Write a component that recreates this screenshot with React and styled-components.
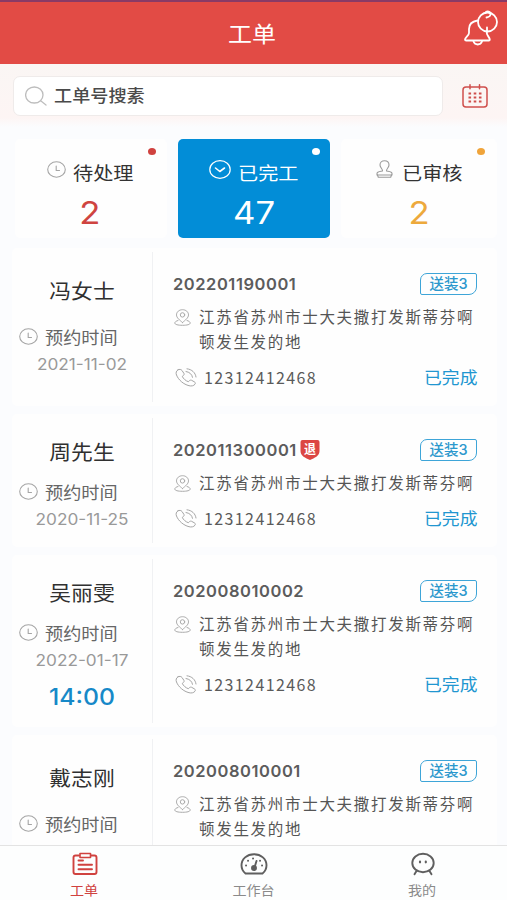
import React from 'react';
import styled, { createGlobalStyle } from 'styled-components';

const cjk = "'Noto Sans CJK SC', sans-serif";
const latin = "Inter, 'Noto Sans CJK SC', sans-serif";

const GlobalStyle = createGlobalStyle`
  * {
    box-sizing: border-box;
  }

  body {
    margin: 0;
    font-family: ${cjk};
    color: #3c3c3c;
    background: #fbfcfe;
  }
`;

const Page = styled.div`
  display: flex;
  flex-direction: column;
  height: 900px;
  overflow: hidden;
  background: #fbfcfe;
`;

const Header = styled.header`
  display: grid;
  grid-template-columns: 1fr auto 1fr;
  align-items: center;
  flex: none;
  height: 64px;
  padding: 0 9px 0 7px;
  border-top: 2px solid #8a3a66;
  background: #e24b45;
`;

const Title = styled.h1`
  grid-column: 2;
  margin: 0 0 2px;
  font-size: 22px;
  font-weight: 400;
  line-height: 30px;
  color: #fff;
  transform: scaleX(1.09);
`;

const BellButton = styled.div`
  justify-self: end;
  height: 38px;
  margin-bottom: 13px;
`;

const SearchBar = styled.div`
  display: flex;
  align-items: center;
  flex: none;
  height: 63px;
  padding: 0 18px 0 13px;
  background: linear-gradient(#faf6f4, #fdf5f4 85%, #fbfcfe);
`;

const SearchInput = styled.div`
  display: flex;
  align-items: center;
  width: 430px;
  height: 40px;
  margin-right: 19px;
  padding-left: 11px;
  border: 1px solid #efebea;
  border-radius: 7px;
  background: #fff;
`;

const SearchText = styled.span`
  margin: 0 0 2px 7px;
  font-size: 16.5px;
  font-weight: 500;
  line-height: 24px;
  color: #4a4a4a;
  transform: scaleX(1.1);
  transform-origin: left;
`;

const Stats = styled.div`
  display: flex;
  gap: 11px;
  flex: none;
  padding: 12px 10px 10px 15px;
`;

const StatCard = styled.div`
  position: relative;
  width: ${(p) => p.$width}px;
  height: 99px;
  padding-top: 20px;
  border-radius: 5px;
  background: ${(p) => (p.$active ? '#028dd7' : '#fefefe')};
  color: ${(p) => (p.$active ? '#fff' : '#333')};
`;

const StatLabel = styled.div`
  display: flex;
  align-items: center;
  height: 26px;
  padding-left: ${(p) => p.$indent}px;
  font-size: 18px;
  white-space: nowrap;

  svg {
    margin: 0 ${(p) => p.$gap}px 6px 0;
  }

  span {
    transform: scaleX(1.12);
    transform-origin: left;
  }
`;

const StatValue = styled.div`
  margin-top: 9px;
  padding-right: ${(p) => p.$shift}px;
  font-family: ${latin};
  font-size: 31px;
  line-height: 38px;
  text-align: center;
  color: ${(p) => p.$color};
  transform: scaleX(1.12);
`;

const Dot = styled.i`
  position: absolute;
  top: 9px;
  right: ${(p) => p.$right}px;
  width: 8px;
  height: 7px;
  border-radius: 50%;
  background: ${(p) => p.$color};
`;

const OrderList = styled.main`
  display: flex;
  flex-direction: column;
  gap: 8px;
  flex: 1;
  min-height: 0;
  padding: 0 10px 0 12px;
  overflow: hidden;
`;

const OrderCard = styled.article`
  display: flex;
  flex: none;
  height: ${(p) => p.$height}px;
  padding: 4px 0;
  border-radius: 5px;
  background: #fefefe;
`;

const Customer = styled.div`
  width: 141px;
  padding-top: ${(p) => (p.$loose ? 26 : 21)}px;
  border-right: 1px solid #f0f1f3;
  text-align: center;
`;

const CustomerName = styled.div`
  margin-bottom: ${(p) => (p.$loose ? 22 : 16)}px;
  font-size: 20px;
  line-height: 26px;
  color: #303030;
  transform: scaleX(1.09);
`;

const Appointment = styled.div`
  display: flex;
  align-items: center;
  height: 22px;
  padding-left: 7px;
  font-size: 16.5px;
  color: #666;

  svg {
    margin: 0 7px 2px 0;
  }

  span {
    transform: scaleX(1.1);
    transform-origin: left;
  }
`;

const OrderDate = styled.div`
  margin-top: 6px;
  font-family: ${latin};
  font-size: 15.5px;
  line-height: 22px;
  color: #999;
  transform: scaleX(1.11);
`;

const OrderTime = styled.div`
  margin-top: 11px;
  font-family: ${latin};
  font-size: 22.5px;
  font-weight: 500;
  line-height: 28px;
  color: #1689c8;
  transform: scaleX(1.1);
`;

const Detail = styled.div`
  flex: 1;
  padding: 21px 20px 0 20px;
`;

const DetailRow = styled.div`
  display: flex;
  align-items: center;
  height: 22px;
`;

const OrderNumber = styled.span`
  font-family: ${latin};
  font-size: 16.5px;
  font-weight: 600;
  line-height: 22px;
  letter-spacing: 0.55px;
  color: #5c5c5c;
`;

const Refund = styled.span`
  position: relative;
  display: flex;
  justify-content: center;
  width: 20px;
  height: 20px;
  margin-left: 3px;
  font-size: 12px;
  font-weight: 700;
  line-height: 17px;
  color: #fff;

  svg {
    position: absolute;
    inset: 0;
  }

  span {
    position: relative;
  }
`;

const Tag = styled.span`
  width: 57px;
  height: 22px;
  margin-left: auto;
  border: 1.5px solid #3ea5d8;
  border-radius: 7px 2px 8px 2px;
  font-family: ${latin};
  font-size: 14.5px;
  font-weight: 500;
  line-height: 20px;
  text-align: center;
  color: #2c98cd;
`;

const Address = styled.div`
  display: flex;
  margin-top: 9px;

  svg {
    flex: none;
    margin: 5px 0 0 1px;
  }

  p {
    width: 284px;
    margin: 0 -10px 0 8px;
    font-size: 15.5px;
    line-height: 25px;
    letter-spacing: 1.7px;
    color: #555;
  }
`;

const Contact = styled(DetailRow)`
  margin-top: 12px;
  padding-left: 2px;
`;

const Phone = styled.span`
  margin-left: 7px;
  font-size: 16px;
  letter-spacing: 1.4px;
  color: #5a5a5a;
`;

const Status = styled.span`
  margin-left: auto;
  font-size: 16.5px;
  color: #2196d0;
  transform: scaleX(1.08);
  transform-origin: right;
`;

const TabBar = styled.nav`
  display: grid;
  grid-template-columns: repeat(3, 1fr);
  flex: none;
  height: 55px;
  border-top: 1px solid #e3e3e3;
  background: #fdfefe;
`;

const Tab = styled.div`
  display: flex;
  flex-direction: column;
  align-items: center;
  padding-top: 5px;
  font-size: 13px;
  line-height: 18px;
  color: ${(p) => (p.$active ? '#d0423f' : '#8a8a8a')};

  svg {
    height: 26px;
    margin-bottom: 4px;
    color: ${(p) => (p.$active ? '#d0423f' : '#5f5f5f')};
  }

  span {
    transform: scaleX(1.08);
  }
`;

const Svg = ({ w, h, width = 1.2, children, ...rest }) => (
  <svg
    width={w}
    height={h}
    viewBox={`0 0 ${w} ${h}`}
    fill="none"
    stroke="currentColor"
    strokeWidth={width}
    strokeLinecap="round"
    strokeLinejoin="round"
    {...rest}
  >
    {children}
  </svg>
);

const BellIcon = () => (
  <Svg w={36} h={38} width={1.8} color="#fff">
    <path d="M15.500 12.500C9.500 13.500 7 17 7 21v4c0 2.500-4 4.500-4 6.500 0 .7.500 1 1.200 1h22.600c.7 0 1-.4 1-1 0-2-3-4-3-6.500v-1.500" />
    <path d="M11.500 33.500c1.500 4 7 4 8.500 0" />
    <circle cx="25.500" cy="14" r="9.500" />
    <path d="M23.500 5c.3-2.200 4.500-2.200 5 .5.3 2-1.500 3.500-4 4M25 19.500v4" />
  </Svg>
);

const SearchIcon = () => (
  <Svg w={22} h={20} width={1.3} color="#bdbdbd">
    <ellipse cx="9.300" cy="9" rx="8.700" ry="8" />
    <path d="M16 15l5 4" />
  </Svg>
);

const CalendarIcon = () => (
  <Svg w={26} h={24} width={1.5} color="#cf4f4c">
    <rect x="1" y="3" width="24" height="20" rx="3" />
    <path d="M8 .8v4M17.500 .8v4" />
    <path d="M6.500 9.500h13M6.500 13.500h13M6.500 17.500h13" strokeWidth="1.800" strokeDasharray="2.600 2.600" strokeLinecap="butt" />
  </Svg>
);

const ClockIcon = () => (
  <Svg w={19} h={17} width={1.1} color="#a5a5a5">
    <ellipse cx="9.500" cy="8.500" rx="8.800" ry="7.700" />
    <path d="M9.200 5v4.500h3.300" />
  </Svg>
);

const CheckIcon = () => (
  <Svg w={22} h={19} width={1.2} color="#fff">
    <ellipse cx="11" cy="9.500" rx="10.200" ry="8.800" />
    <path d="M6.500 8l4.300 3.500L15.500 8" strokeWidth="1.600" />
  </Svg>
);

const StampIcon = () => (
  <Svg w={17} h={18} width={1.1} color="#9a9a9a">
    <path d="M6.500 11c.3-2.200-2.500-3.200-2.500-6 0-2.500 2-4.200 4.500-4.200S13 2.500 13 5c0 2.800-2.800 3.800-2.500 6 2.500.5 5.500.5 5.500 2.500v1.500H1v-1.500c0-2 3-2 5.500-2.500z" />
    <path d="M1.500 15l.8 2.300h12.400l.8-2.300" />
  </Svg>
);

const PinIcon = () => (
  <Svg w={17} h={17} width={1} color="#aaa">
    <path d="M8.500 13.500C5.500 11 2.500 8.700 2.500 5.900c0-3 2.700-5.200 6-5.200s6 2.200 6 5.200c0 2.800-3 5.100-6 7.600z" />
    <circle cx="8.500" cy="5.900" r="2.200" />
    <path d="M4 11.500c-2 .5-3.200 1.500-3.200 2.500 0 1.500 3 2.300 7.700 2.300s7.700-.8 7.700-2.300c0-1-1.200-2-3.200-2.500" />
  </Svg>
);

const PhoneIcon = () => (
  <Svg w={22} h={19} width={1} color="#a5a5a5">
    <path d="M3 1.800C1.200 2.800.6 4.800 1.500 7c2 5 7 9.300 12.500 10.700 2.300.6 4.800.2 6-1.500.6-.9.400-1.700-.4-2.200l-2.800-1.600c-.8-.5-1.700-.3-2.400.3l-1.100 1c-2.600-.9-5-3-6-5.300l1.200-1c.7-.6.8-1.400.3-2.200L7 2.500c-.8-1.200-2.500-1.500-4-.7z" />
    <path d="M11 3.500c3.500.5 6 2.800 6.500 5.800M12 .8c5 .5 8.500 4 9 8.200" />
  </Svg>
);

const RefundShield = () => (
  <svg width="20" height="20" viewBox="0 0 20 20" fill="#dc4643">
    <path d="M2.500 0h15A2 2 0 0 1 19.500 2v9c0 5-5 7-9.500 9C5.500 18 .5 16 .5 11V2a2 2 0 0 1 2-2z" />
  </svg>
);

const OrdersIcon = () => (
  <Svg w={26} h={26} width={1.9}>
    <path d="M7 4.500H3.500C2.200 4.500 1.500 5.200 1.500 6.500v14.500c0 1.300.7 2 2 2h19c1.300 0 2-.7 2-2V6.500c0-1.300-.7-2-2-2H19" />
    <path d="M8 2.500h10.500v4H8z" strokeWidth="1.600" />
    <path d="M6.500 9.500h4.500M6.500 13.800h13.500M6.500 18.300h13.500" />
  </Svg>
);

const DashboardIcon = () => (
  <Svg w={28} h={26} width={1.9}>
    <path d="M5.500 22.500C3 20.500 1.500 17.500 1.500 14.300 1.500 8 7 3.200 14 3.200S26.500 8 26.500 14.300c0 3.200-1.500 6.200-4 8.200z" />
    <circle cx="14" cy="17" r="2" fill="currentColor" />
    <path d="M14.500 16.500L16.500 10" />
    <path d="M6 14.500h.1M8 9.700h.1M13 7.500h.1M20 9.700h.1M22 14.500h.1" />
  </Svg>
);

const MineIcon = () => (
  <Svg w={26} h={26} width={1.9}>
    <ellipse cx="13" cy="12" rx="10.700" ry="9.300" />
    <path d="M6.500 20l-2 3.300M19.500 20l2 3.300" />
    <path d="M10 10.700v.6M15.800 10.700v.6" strokeWidth="2.200" />
  </Svg>
);

const phone = '12312412468';
const shortAddress = '江苏省苏州市士大夫撒打发斯蒂芬啊';
const longAddress = `${shortAddress}顿发生发的地`;

const orders = [
  { name: '冯女士', date: '2021-11-02', number: '202201190001', address: longAddress, phone, height: 158, loose: true },
  { name: '周先生', date: '2020-11-25', number: '202011300001', address: shortAddress, phone, height: 133, refund: true },
  { name: '吴丽雯', date: '2022-01-17', time: '14:00', number: '202008010002', address: longAddress, phone, height: 172 },
  { name: '戴志刚', date: '2020-07-29', number: '202008010001', address: longAddress, height: 158, loose: true },
];

const Order = ({ order }) => (
  <OrderCard $height={order.height}>
    <Customer $loose={order.loose}>
      <CustomerName $loose={order.loose}>{order.name}</CustomerName>
      <Appointment>
        <ClockIcon />
        <span>预约时间</span>
      </Appointment>
      <OrderDate>{order.date}</OrderDate>
      {order.time && <OrderTime>{order.time}</OrderTime>}
    </Customer>
    <Detail>
      <DetailRow>
        <OrderNumber>{order.number}</OrderNumber>
        {order.refund && (
          <Refund>
            <RefundShield />
            <span>退</span>
          </Refund>
        )}
        <Tag>送装3</Tag>
      </DetailRow>
      <Address>
        <PinIcon />
        <p>{order.address}</p>
      </Address>
      {order.phone && (
        <Contact>
          <PhoneIcon />
          <Phone>{order.phone}</Phone>
          <Status>已完成</Status>
        </Contact>
      )}
    </Detail>
  </OrderCard>
);

const App = () => {
  return (
    <>
      <GlobalStyle />
      <Page>
        <Header>
          <Title>工单</Title>
          <BellButton>
            <BellIcon />
          </BellButton>
        </Header>

        <SearchBar>
          <SearchInput>
            <SearchIcon />
            <SearchText>工单号搜素</SearchText>
          </SearchInput>
          <CalendarIcon />
        </SearchBar>

        <Stats>
          <StatCard $width={152}>
            <Dot $color="#d0423f" $right={11} />
            <StatLabel $indent={32} $gap={7}>
              <ClockIcon />
              <span>待处理</span>
            </StatLabel>
            <StatValue $color="#cf4440" $shift={2}>2</StatValue>
          </StatCard>
          <StatCard $width={152} $active>
            <Dot $color="#fff" $right={10} />
            <StatLabel $indent={31} $gap={7}>
              <CheckIcon />
              <span>已完工</span>
            </StatLabel>
            <StatValue $color="#fff" $shift={0}>47</StatValue>
          </StatCard>
          <StatCard $width={156}>
            <Dot $color="#f0a43a" $right={12} />
            <StatLabel $indent={35} $gap={9}>
              <StampIcon />
              <span>已审核</span>
            </StatLabel>
            <StatValue $color="#eda93c" $shift={0}>2</StatValue>
          </StatCard>
        </Stats>

        <OrderList>
          {orders.map((order) => (
            <Order key={order.number} order={order} />
          ))}
        </OrderList>

        <TabBar>
          <Tab $active>
            <OrdersIcon />
            <span>工单</span>
          </Tab>
          <Tab>
            <DashboardIcon />
            <span>工作台</span>
          </Tab>
          <Tab>
            <MineIcon />
            <span>我的</span>
          </Tab>
        </TabBar>
      </Page>
    </>
  );
};

export default App;
